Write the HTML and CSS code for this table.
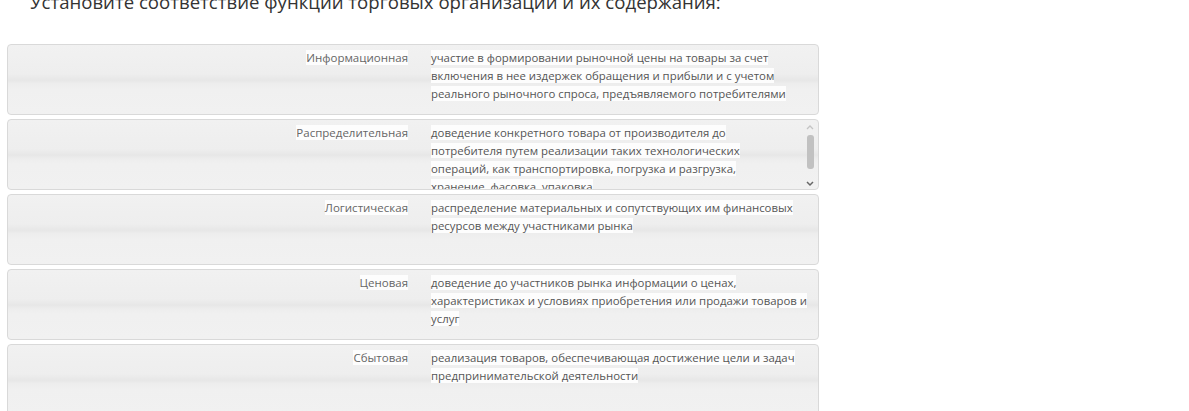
FILE: index.html
```html
<!DOCTYPE html>
<html lang="ru">
<head>
<meta charset="utf-8">
<title>Соответствие</title>
<link rel="stylesheet" href="styles.css">
</head>
<body>
<h1 class="title">Установите соответствие функции торговых организаций и их содержания:</h1>
<div class="list">
  <div class="row">
    <div class="label"><span>Информационная</span></div>
    <div class="content"><span>участие в формировании рыночной цены на товары за счет включения в нее издержек обращения и прибыли и с учетом реального рыночного спроса, предъявляемого потребителями</span></div>
  </div>
  <div class="row">
    <div class="label"><span>Распределительная</span></div>
    <div class="content scroll"><span>доведение конкретного товара от производителя до потребителя путем реализации таких технологических операций, как транспортировка, погрузка и разгрузка, хранение, фасовка, упаковка</span></div>
    <div class="scrollbar" aria-hidden="true">
      <svg class="arrow" width="8" height="6" viewBox="0 0 8 6"><path d="M1 5 L4 2 L7 5" fill="none" stroke="#c4c4c4" stroke-width="1.3"/></svg>
      <div class="track"><div class="thumb"></div></div>
      <svg class="arrow" width="8" height="6" viewBox="0 0 8 6"><path d="M1 1 L4 4 L7 1" fill="none" stroke="#666" stroke-width="1.5"/></svg>
    </div>
  </div>
  <div class="row">
    <div class="label"><span>Логистическая</span></div>
    <div class="content"><span>распределение материальных и сопутствующих им финансовых ресурсов между участниками рынка</span></div>
  </div>
  <div class="row">
    <div class="label"><span>Ценовая</span></div>
    <div class="content"><span>доведение до участников рынка информации о ценах, характеристиках и условиях приобретения или продажи товаров и услуг</span></div>
  </div>
  <div class="row">
    <div class="label"><span>Сбытовая</span></div>
    <div class="content"><span>реализация товаров, обеспечивающая достижение цели и задач предпринимательской деятельности</span></div>
  </div>
</div>
</body>
</html>
```
FILE: styles.css
```css
html, body {
  margin: 0;
  padding: 0;
  background: #fff;
  overflow: hidden;
}
body {
  font-family: "Open Sans", "Noto Sans", sans-serif;
  color: #555;
}
.title {
  margin: -13px 0 0 30px;
  font-size: 18.6px;
  font-weight: 400;
  line-height: 30px;
  color: #333;
  white-space: nowrap;
}
.list {
  margin: 27px 0 0 7px;
  width: 812px;
  display: flex;
  flex-direction: column;
  gap: 4px;
}
.row {
  box-sizing: border-box;
  height: 71px;
  border: 1px solid #d9d9d9;
  border-radius: 4px;
  display: flex;
  background: linear-gradient(to bottom, #f1f1f1 0%, #eeeeee 42%, #e7e7e7 51%, #ededed 56%, #f0f0f0 64%, #f1f1f1 100%);
}
.label {
  flex: 0 0 400px;
  text-align: right;
  font-size: 11.5px;
  line-height: 18px;
  padding-top: 4px;
  color: #666;
}
.label span, .content span {
  background: #fdfdfd;
}
.content {
  flex: 1;
  padding: 4px 6px 0 23px;
  font-size: 11.4px;
  line-height: 18px;
  color: #555;
}
.scroll {
  overflow: hidden;
  padding-right: 10px;
}
.scrollbar {
  flex: 0 0 12px;
  margin-right: 2px;
  padding: 4px 0 2px;
  display: flex;
  flex-direction: column;
  align-items: center;
  gap: 4px;
}
.arrow {
  display: block;
  flex: 0 0 auto;
}
.track {
  flex: 1;
  width: 100%;
  display: flex;
  justify-content: center;
  padding-top: 1px;
  padding-bottom: 8px;
}
.thumb {
  width: 7px;
  height: 34px;
  background: #c1c1c1;
  border-radius: 3px;
}
```
